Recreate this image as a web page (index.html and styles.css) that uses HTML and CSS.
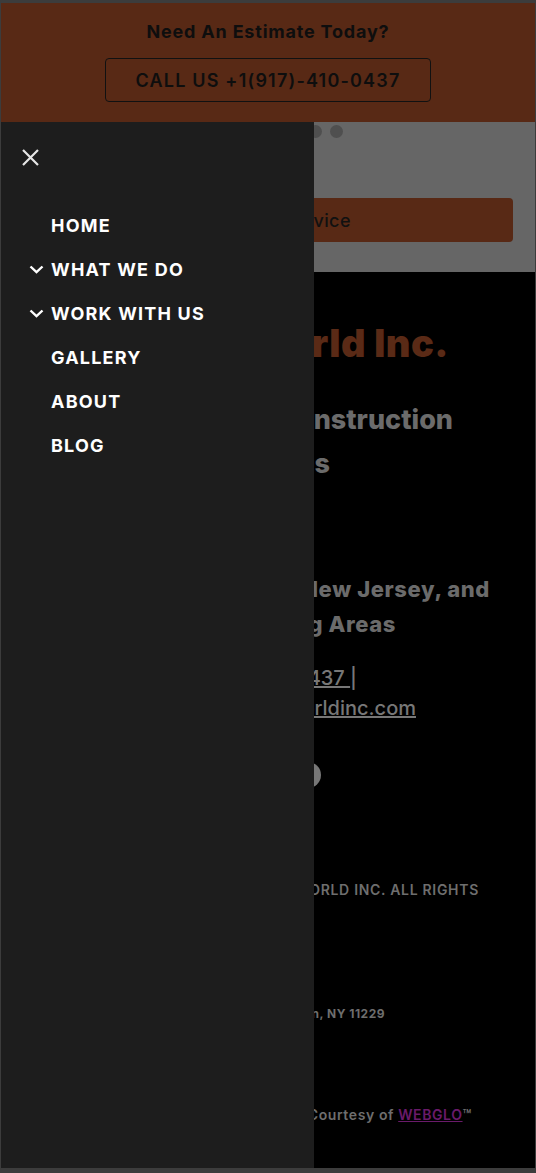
FILE: index.html
```html
<!DOCTYPE html>
<html lang="en">
<head>
<meta charset="utf-8">
<title>Construction World Inc.</title>
<link rel="stylesheet" href="styles.css">
</head>
<body>
<div class="page">
  <header class="banner">
    <p class="banner-title">Need An Estimate Today?</p>
    <a class="call-btn" href="#">CALL US +1(917)-410-0437</a>
  </header>
  <main class="main">
    <section class="hero">
      <div class="dots">
        <span class="dot"></span><span class="dot"></span><span class="dot"></span>
      </div>
      <a class="service-btn" href="#">Request A Service</a>
    </section>
    <section class="dark">
      <h1 class="line title">World Inc.</h1>
      <h2 class="subtitle">
        <span class="line sub1">Construction</span>
        <span class="line sub2">Services</span>
      </h2>
      <h3 class="areas">
        <span class="line ar1">Serving New York, New Jersey, and</span>
        <span class="line ar2">Surrounding Areas</span>
      </h3>
      <div class="contact">
        <span class="line ct1"><a href="#">+1(917)-410-0437 </a>|</span>
        <span class="line ct2"><a href="#">info@constructionworldinc.com</a></span>
      </div>
      <div class="social"><span class="social-dot"></span></div>
      <p class="line copy">© 2024 CONSTRUCTION WORLD INC. ALL RIGHTS</p>
      <p class="line addr">2134 Avenue U, Brooklyn, NY 11229</p>
      <p class="line credit">Website Courtesy of <a href="#">WEBGLO</a>™</p>
    </section>
    <nav class="drawer">
      <button class="close" aria-label="Close">
        <svg width="17" height="17" viewBox="0 0 17 17"><path d="M1 1 L16 16 M16 1 L1 16" stroke="#e6e6e6" stroke-width="2.2" fill="none"/></svg>
      </button>
      <ul class="menu">
        <li class="item"><span class="icon"></span>HOME</li>
        <li class="item"><span class="icon"><svg width="15" height="9" viewBox="0 0 15 9"><path d="M1.5 1.5 L7.5 7.2 L13.5 1.5" stroke="#fff" stroke-width="2.4" fill="none"/></svg></span>WHAT WE DO</li>
        <li class="item"><span class="icon"><svg width="15" height="9" viewBox="0 0 15 9"><path d="M1.5 1.5 L7.5 7.2 L13.5 1.5" stroke="#fff" stroke-width="2.4" fill="none"/></svg></span>WORK WITH US</li>
        <li class="item"><span class="icon"></span>GALLERY</li>
        <li class="item"><span class="icon"></span>ABOUT</li>
        <li class="item"><span class="icon"></span>BLOG</li>
      </ul>
    </nav>
  </main>
</div>
</body>
</html>
```
FILE: styles.css
```css
* { box-sizing: border-box; }
html, body { margin: 0; padding: 0; }
body {
  background: #3c3c3c;
  font-family: Inter, "Liberation Sans", sans-serif;
  width: 536px;
  height: 1173px;
  overflow: hidden;
}
.page {
  margin: 3px 1px 0 1px;
  height: 1165px;
  display: flex;
  flex-direction: column;
  overflow: hidden;
}
.banner {
  background: #582915;
  height: 119px;
  display: flex;
  flex-direction: column;
  align-items: center;
  padding-top: 18px;
}
.banner-title {
  margin: 0;
  font-size: 18px;
  font-weight: 700;
  line-height: 22px;
  color: #0e0e0e;
  letter-spacing: 0.8px;
}
.call-btn {
  margin-top: 15px;
  width: 326px;
  height: 44px;
  border: 1px solid #111;
  border-radius: 4px;
  display: flex;
  align-items: center;
  justify-content: center;
  font-size: 18px;
  font-weight: 600;
  color: #0e0e0e;
  text-decoration: none;
  letter-spacing: 1.2px;
}
.main {
  position: relative;
  flex: 1;
  display: flex;
  flex-direction: column;
  background: #000;
}
.hero {
  background: #666;
  height: 150px;
  padding-top: 3px;
  display: flex;
  flex-direction: column;
}
.dots {
  display: flex;
  justify-content: flex-end;
  gap: 8px;
  padding-right: 192px;
}
.dot {
  width: 13px;
  height: 13px;
  border-radius: 50%;
  background: #4f4f4f;
}
.service-btn {
  margin: 60px 22px 0 23px;
  height: 44px;
  border-radius: 4px;
  background: #582915;
  color: #111;
  font-size: 18px;
  font-weight: 500;
  letter-spacing: 0.4px;
  display: flex;
  align-items: center;
  justify-content: center;
  text-decoration: none;
}
.dark {
  display: flex;
  flex-direction: column;
  padding-top: 49px;
  color: #6b6b6b;
}
.line {
  display: block;
  text-align: right;
  white-space: nowrap;
  margin: 0;
}
.title {
  font-size: 38px;
  font-weight: 900;
  line-height: 44px;
  color: #5a2a16;
  padding-right: 86px;
  letter-spacing: 0.5px;
}
.subtitle {
  margin: 33px 0 0;
  font-size: 27px;
  font-weight: 800;
  line-height: 44px;
}
.sub1 { padding-right: 82px; }
.sub2 { padding-right: 205px; }
.areas {
  margin: 86px 0 0;
  font-size: 22px;
  font-weight: 800;
  line-height: 35px;
  letter-spacing: 0.6px;
}
.ar1 { padding-right: 45px; }
.ar2 { padding-right: 139px; }
.contact {
  margin-top: 21px;
  font-size: 20px;
  font-weight: 500;
  line-height: 30px;
  color: #777;
}
.contact a { color: #777; }
.ct1 { padding-right: 178px; }
.ct2 { padding-right: 119px; }
.social {
  margin-top: 39px;
  display: flex;
  justify-content: flex-end;
  padding-right: 214px;
}
.social-dot {
  width: 26px;
  height: 26px;
  border-radius: 50%;
  background: #777;
}
.copy {
  margin-top: 92px;
  font-size: 14px;
  font-weight: 600;
  line-height: 20px;
  color: #6e6e6e;
  padding-right: 56px;
  letter-spacing: 0.7px;
}
.addr {
  margin-top: 105px;
  font-size: 12px;
  font-weight: 700;
  line-height: 18px;
  color: #6e6e6e;
  padding-right: 150px;
  letter-spacing: 0.5px;
}
.credit {
  margin-top: 82px;
  font-size: 14px;
  font-weight: 600;
  line-height: 20px;
  color: #6e6e6e;
  padding-right: 63px;
  letter-spacing: 0.6px;
}
.credit a { color: #6a1a6a; }
.drawer {
  position: absolute;
  top: 0;
  left: 0;
  bottom: 0;
  width: 313px;
  background: #1d1d1d;
  padding: 27px 0 0 21px;
  display: flex;
  flex-direction: column;
  align-items: flex-start;
}
.close {
  border: 0;
  background: none;
  padding: 0;
  width: 17px;
  height: 17px;
  display: block;
}
.close svg { display: block; }
.menu {
  list-style: none;
  margin: 37px 0 0;
  padding: 0 0 0 6px;
}
.item {
  height: 44px;
  display: flex;
  align-items: center;
  color: #fff;
  font-size: 18px;
  font-weight: 700;
  letter-spacing: 1.2px;
}
.icon {
  width: 23px;
  display: flex;
  align-items: center;
  padding-left: 1px;
}
.icon svg { display: block; }
```
